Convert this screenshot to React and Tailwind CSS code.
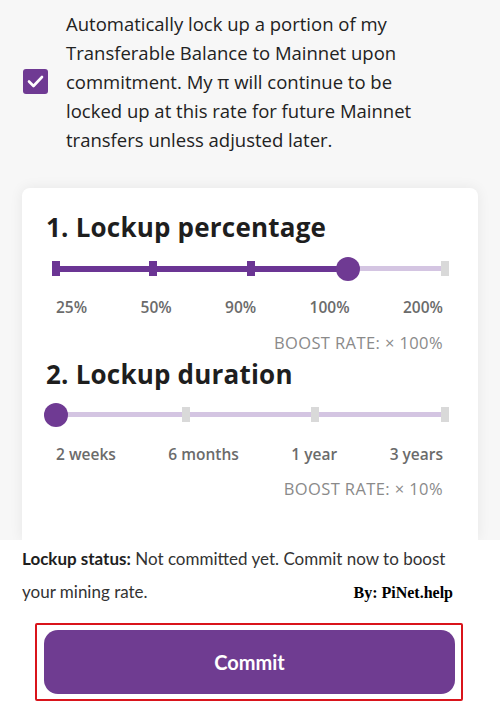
import React from "react";

function Slider({ n, value }) {
  const start = 4;
  const span = 389;
  const pos = (i) => start + (i * span) / n;
  const ticks = Array.from({ length: n + 1 }, (_, i) => i);
  const thumbX = pos(value);
  return (
    <div className="relative h-6 w-[396px] ml-[6px]">
      <div
        className="absolute top-[9px] h-[5px] bg-[#d4c5e2]"
        style={{ left: start, width: span }}
      />
      <div
        className="absolute top-[9px] h-[6px] bg-[#6b3594]"
        style={{ left: start, width: thumbX - start }}
      />
      {ticks.map((i) => (
        <div
          key={i}
          className={
            "absolute top-[4px] h-[15px] w-[8px] " +
            (i <= value ? "bg-[#6b3594]" : "bg-[#d9d9d9]")
          }
          style={{ left: pos(i) - 4 }}
        />
      ))}
      <div
        className="absolute top-0 h-6 w-6 rounded-full bg-[#6f3a93]"
        style={{ left: thumbX - 12 }}
      />
    </div>
  );
}

function Labels({ items }) {
  return (
    <div className="ml-[10px] w-[387px] flex justify-between font-['Open_Sans',sans-serif] text-[15.5px] leading-5 font-semibold text-[#6b6b6b]">
      {items.map((t) => (
        <span key={t}>{t}</span>
      ))}
    </div>
  );
}

export default function App() {
  return (
    <div className="w-[500px] h-[715px] overflow-hidden bg-white font-['Lato',sans-serif] text-[#1e1e1e] flex flex-col">
      <div className="bg-[#f7f7f7] flex flex-col">
        <div className="flex items-center pt-[9px] pl-[23px]">
          <div className="w-[25px] h-[25px] rounded-[3px] bg-[#6f3a93] flex items-center justify-center shrink-0">
            <svg width="17" height="13" viewBox="0 0 17 13" fill="none">
              <path
                d="M2 6.5 L6.5 11 L15 2"
                stroke="white"
                strokeWidth="2.6"
                strokeLinecap="round"
                strokeLinejoin="round"
              />
            </svg>
          </div>
          <p className="ml-[18px] font-['Open_Sans',sans-serif] text-[18.5px] leading-[29px] text-[#222]">
            Automatically lock up a portion of my
            <br />
            Transferable Balance to Mainnet upon
            <br />
            commitment. My π will continue to be
            <br />
            locked up at this rate for future Mainnet
            <br />
            transfers unless adjusted later.
          </p>
        </div>
        <div className="mx-[22px] mt-[34px] h-[352px] bg-white rounded-t-lg shadow-[0_0_14px_rgba(0,0,0,0.07)] px-6 pt-[23px] flex flex-col">
          <h2 className="font-['Open_Sans',sans-serif] text-[26px] leading-8 font-bold tracking-[0.2px]">1. Lockup percentage</h2>
          <div className="mt-[14px]">
            <Slider n={4} value={3} />
          </div>
          <div className="mt-[16px]">
            <Labels items={["25%", "50%", "90%", "100%", "200%"]} />
          </div>
          <div className="mt-[16px] ml-[10px] w-[387px] text-right font-['Open_Sans',sans-serif] text-[16.5px] tracking-[0.4px] leading-5 text-[#8a8a8a]">
            BOOST RATE: × 100%
          </div>
          <h2 className="mt-[5px] font-['Open_Sans',sans-serif] text-[26px] leading-8 font-bold tracking-[0.2px]">2. Lockup duration</h2>
          <div className="mt-[13px]">
            <Slider n={3} value={0} />
          </div>
          <div className="mt-[17px]">
            <Labels items={["2 weeks", "6 months", "1 year", "3 years"]} />
          </div>
          <div className="mt-[15px] ml-[10px] w-[387px] text-right font-['Open_Sans',sans-serif] text-[16.5px] tracking-[0.4px] leading-5 text-[#8a8a8a]">
            BOOST RATE: × 10%
          </div>
        </div>
      </div>
      <div className="bg-white flex flex-col pt-[2px]">
        <div className="pl-[22px] pr-[47px] text-[17px] leading-[33px] text-[#333]">
          <div>
            <span className="font-bold text-[#1e1e1e]">Lockup status:</span> Not committed yet. Commit now to boost
          </div>
          <div className="flex justify-between items-baseline">
            <span>your mining rate.</span>
            <span className="font-['Liberation_Serif',serif] font-bold text-[16px] text-black">By: PiNet.help</span>
          </div>
        </div>
        <div className="mt-[14px] ml-[35px] w-[428px] h-[78px] border-2 border-[#d9141b] rounded-[2px] pl-[7px] pr-[6px] py-[5px]">
          <button className="w-full h-full rounded-[14px] bg-[#6f3c91] text-white text-[20px] font-bold flex items-center justify-center">
            Commit
          </button>
        </div>
      </div>
    </div>
  );
}
